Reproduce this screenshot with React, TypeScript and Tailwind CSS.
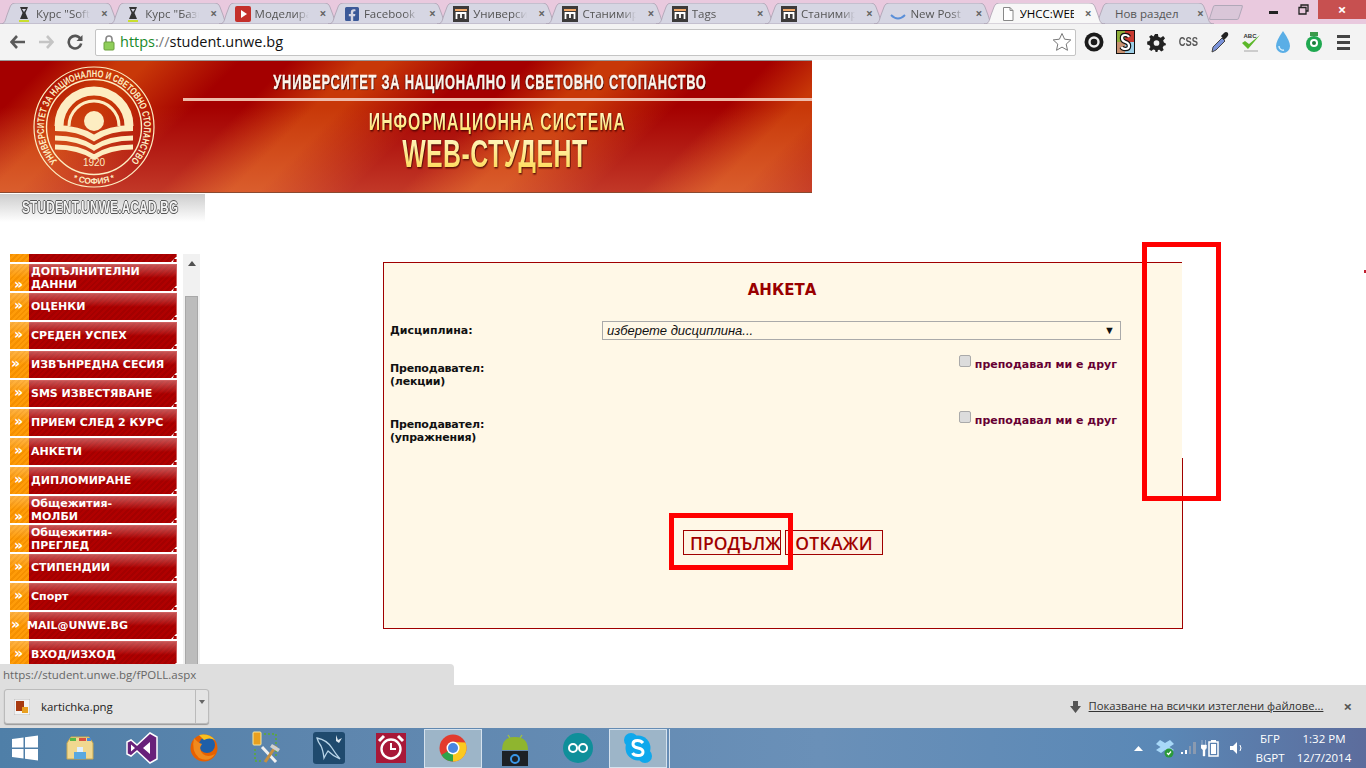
import { ReactNode } from "react";
import { FaFacebookSquare } from "react-icons/fa";

const ui = { fontFamily: '"Open Sans", "Liberation Sans", sans-serif' };

const BowFav = () => (
  <svg width="16" height="16" viewBox="0 0 16 16">
    <path d="M4 1 L12 1 L9.5 7 L12 13 L4 13 L6.5 7 Z M6 3 L8 6 L10 3 Z" fill="#333" fillRule="evenodd" />
    <path d="M3 15 H13" stroke="#c6e000" strokeWidth="1.6" />
  </svg>
);

const YtFav = () => (
  <svg width="16" height="16" viewBox="0 0 16 16">
    <rect x="0" y="0" width="16" height="16" rx="2" fill="#c4302b" />
    <path d="M6 4 L12 8 L6 12 Z" fill="#fff" />
  </svg>
);

const MFav = () => (
  <svg width="16" height="16" viewBox="0 0 16 16">
    <rect width="16" height="16" fill="#3c3a3a" />
    <rect x="2" y="3" width="12" height="2" fill="#f0a868" />
    <path d="M3.5 13 V7 H12.5 V13 M8 7 V12" fill="none" stroke="#fff" strokeWidth="1.8" />
  </svg>
);

const tabs: { title: string; icon: ReactNode; active?: boolean }[] = [
  { title: 'Курс "Soft', icon: <BowFav /> },
  { title: 'Курс "Бази', icon: <BowFav /> },
  { title: "Моделира", icon: <YtFav /> },
  { title: "Facebook", icon: <FaFacebookSquare className="text-[#3b5998] text-[16px]" /> },
  { title: "Универси", icon: <MFav /> },
  { title: "Станимир", icon: <MFav /> },
  { title: "Tags", icon: <MFav /> },
  { title: "Станимир", icon: <MFav /> },
  {
    title: "New Post",
    icon: (
      <svg width="16" height="16" viewBox="0 0 16 16">
        <path d="M1 9 Q8 16 15 9" fill="none" stroke="#5b8fd8" strokeWidth="1.8" />
      </svg>
    ),
  },
  {
    title: "УНСС:WEB",
    active: true,
    icon: (
      <svg width="16" height="16" viewBox="0 0 16 16">
        <path d="M3.5 1.5 H10 L13 4.5 V14.5 H3.5 Z M10 1.5 V4.5 H13" fill="#fff" stroke="#888" />
      </svg>
    ),
  },
  { title: "Нов раздел", icon: null },
];

const TabShape = ({ active }: { active?: boolean }) => (
  <svg className="absolute top-0 left-[-6px] h-[21px] w-[121px]" viewBox="0 0 121 21" preserveAspectRatio="none">
    <path
      d="M0 21 C5 21 5 18 7 12 L10 4 C11 1 13 0 16 0 H105 C108 0 110 1 111 4 L114 12 C116 18 116 21 121 21 Z"
      fill={active ? "#f7f7f7" : "#d6d6e3"}
      stroke="#a9a0b0"
      strokeWidth="0.8"
    />
  </svg>
);

const Tab = ({ title, icon, active }: { title: string; icon: ReactNode; active?: boolean }) => (
  <div className={active ? "relative z-10 h-[21px] w-[109.3px] shrink-0" : "relative h-[21px] w-[109.3px] shrink-0"}>
    <TabShape active={active} />
    <div className="relative flex h-full items-center pl-[10px]">
      {icon ? (
        <>
          <span className="flex w-[16px] shrink-0 justify-center">{icon}</span>
          <span className={active ? "ml-[4px] w-[54px] overflow-hidden text-[11.5px] whitespace-nowrap text-black" : "ml-[4px] w-[54px] overflow-hidden text-[11.5px] whitespace-nowrap text-[#555] [mask-image:linear-gradient(to_right,black_75%,transparent)]"}>
            {title}
          </span>
          <span className="ml-[11px] text-[12px] font-bold text-[#666]">×</span>
        </>
      ) : (
        <>
          <span className="ml-[6px] w-[62px] text-[11.5px] whitespace-nowrap text-[#555]">{title}</span>
          <span className="ml-[20px] text-[12px] font-bold text-[#666]">×</span>
        </>
      )}
    </div>
  </div>
);

const ToolbarIcons = () => (
  <div className="ml-[2px] flex items-center">
    <span className="flex w-[31.5px] justify-center">
      <svg width="20" height="20" viewBox="0 0 20 20">
        <circle cx="10" cy="10" r="9.5" fill="#1a1a1a" />
        <circle cx="10" cy="10" r="4.5" fill="none" stroke="#eee" strokeWidth="2.4" />
      </svg>
    </span>
    <span className="flex w-[31.5px] justify-center">
      <svg width="19" height="24" viewBox="0 0 19 24">
        <rect width="19" height="24" fill="#111" />
        <rect x="1" y="1" width="8" height="11" fill="#8fae3a" />
        <rect x="9" y="1" width="9" height="11" fill="#c83a30" />
        <rect x="1" y="12" width="8" height="11" fill="#c89070" />
        <rect x="9" y="12" width="9" height="11" fill="#9fd0e8" />
        <path d="M13 7 Q12 5 9 5 Q6 5 6 8 Q6 11 9.5 12 Q13 13 13 16 Q13 19 9.5 19 Q6.5 19 5.5 17" fill="none" stroke="#111" strokeWidth="4.5" />
        <path d="M13 7 Q12 5 9 5 Q6 5 6 8 Q6 11 9.5 12 Q13 13 13 16 Q13 19 9.5 19 Q6.5 19 5.5 17" fill="none" stroke="#fff" strokeWidth="2.2" />
      </svg>
    </span>
    <span className="flex w-[31.5px] justify-center">
      <svg width="19" height="19" viewBox="0 0 20 20">
        <path
          d="M8.5 1 H11.5 L12 4 L14.5 5 L17 3.2 L19 5.5 L17 8 L17.8 10 L19.8 11 V13 L17.6 13.5 L16.5 15.5 L17.6 18 L15 19.5 L13 17.6 L11.5 18 L11 20 H9 L8.5 18 L6.5 17.4 L4.5 19 L2.2 17 L3.6 14.8 L2.6 12.8 L0.2 12 V9 L2.6 8.4 L3.6 6 L2.2 4 L4.5 2 L6.8 3.6 Z"
          fill="#222"
        />
        <circle cx="10" cy="10.5" r="3" fill="#f2f2f2" />
      </svg>
    </span>
    <span className="flex w-[31.5px] justify-center text-[12px] font-bold text-[#555]" style={{ fontFamily: '"Liberation Sans", sans-serif' }}>
      <span className="inline-block scale-x-[0.78]">CSS</span>
    </span>
    <span className="flex w-[31.5px] justify-center">
      <svg width="20" height="24" viewBox="0 0 20 24">
        <path d="M2 22 L3 17 L12 8 L15 11 L6 20 Z" fill="#7a92d8" stroke="#444" />
        <path d="M11 6 L14 3 Q16 1 18 3 Q19 5 17 7 L14 10 Z" fill="#222" />
      </svg>
    </span>
    <span className="flex w-[31.5px] justify-center">
      <svg width="22" height="24" viewBox="0 0 22 24">
        <path d="M2 13 L8 19 L20 5 L9 14 L5 11 Z" fill="#5cb82a" />
        <path d="M4 21 H18" stroke="#ccc" strokeWidth="2" />
        <rect x="5" y="2" width="10" height="6" fill="#f2f2f2" />
        <text x="10" y="8" textAnchor="middle" fontSize="6" fontWeight="700" fill="#333" fontFamily="Liberation Sans">ABC</text>
      </svg>
    </span>
    <span className="flex w-[31.5px] justify-center">
      <svg width="16" height="24" viewBox="0 0 16 24">
        <path d="M8 1 Q15 11 15 16 A7 7 0 0 1 1 16 Q1 11 8 1 Z" fill="#5aaee6" />
        <path d="M4 16 A4 4 0 0 0 9 20" fill="none" stroke="#d2ecfb" strokeWidth="1.5" />
      </svg>
    </span>
    <span className="flex w-[31.5px] justify-center">
      <svg width="18" height="24" viewBox="0 0 18 24">
        <path d="M5 2 H13 V6 H5 Z" fill="#3a9a4a" />
        <circle cx="9" cy="14" r="8" fill="#1fa850" />
        <circle cx="9" cy="13" r="4" fill="#fff" />
        <circle cx="9" cy="13" r="2" fill="#1a7a3a" />
      </svg>
    </span>
    <span className="ml-[-2px] flex w-[30px] flex-col items-center gap-[3px]">
      <span className="h-[3px] w-[13px] bg-[#444]" />
      <span className="h-[3px] w-[13px] bg-[#444]" />
      <span className="h-[3px] w-[13px] bg-[#444]" />
    </span>
  </div>
);

const Logo = () => (
  <svg className="mt-[5px] ml-[33px] shrink-0" width="122" height="122" viewBox="0 0 122 122">
    <defs>
      <path id="ringTop" d="M25.6 96.4 A50 50 0 1 1 96.4 96.4" />
      <path id="ringBottom" d="M24.4 104.7 A57 57 0 0 0 97.6 104.7" />
    </defs>
    <g fill="none" stroke="#fdedc2">
      <circle cx="61" cy="61" r="60" strokeWidth="1.2" />
      <circle cx="61" cy="61" r="47.5" strokeWidth="1.4" />
      <path d="M26 60 A35 35 0 0 1 96 60" strokeWidth="9" />
      <path d="M36 60 A25 25 0 0 1 86 60" strokeWidth="3" />
    </g>
    <circle cx="61" cy="55" r="10" fill="#fdedc2" />
    <g fill="none" stroke="#fdedc2">
      <path d="M22 62 Q46 62 61 72 Q76 62 100 62" strokeWidth="6" />
      <path d="M22 72 Q46 72 61 82 Q76 72 100 72" strokeWidth="5" />
      <path d="M22 81 Q46 81 61 91 Q76 81 100 81" strokeWidth="5" />
    </g>
    <g fill="#fdedc2" fontFamily="Liberation Sans, sans-serif" fontWeight="700">
      <text fontSize="10">
        <textPath href="#ringTop" startOffset="2" textLength="231" lengthAdjust="spacingAndGlyphs">УНИВЕРСИТЕТ ЗА НАЦИОНАЛНО И СВЕТОВНО СТОПАНСТВО</textPath>
      </text>
      <text fontSize="8.5">
        <textPath href="#ringBottom" startOffset="50%" textAnchor="middle">* СОФИЯ *</textPath>
      </text>
      <text x="61" y="100" textAnchor="middle" fontSize="10" fontWeight="400">1920</text>
    </g>
  </svg>
);

const banner = { fontFamily: '"Liberation Sans", sans-serif' };

const Banner = () => (
  <div className="flex h-[134px] w-[812px] border-t border-b border-t-[#999] border-b-[#8a4a30] bg-[linear-gradient(to_bottom,rgba(255,170,120,0)_35%,rgba(255,170,120,0.33)_100%),repeating-linear-gradient(135deg,#a40000_0px,#a40000_35px,#c83808_85px,#c83808_105px,#a40000_170px)]">
    <Logo />
    <div className="ml-[28px] flex w-[629px] flex-col items-center" style={banner}>
      <div className="mt-[9px] mr-[16px] scale-x-[0.612] text-[21px] leading-[24px] font-bold tracking-[1.25px] whitespace-nowrap text-[#fff4ea] [-webkit-text-stroke:0.4px_#fff4ea] [text-shadow:1px_1px_1px_#3a0000,-1px_0_1px_#5a0000]">
        УНИВЕРСИТЕТ ЗА НАЦИОНАЛНО И СВЕТОВНО СТОПАНСТВО
      </div>
      <div className="mt-[4px] h-[3px] w-full bg-[#eebbaa]" />
      <div className="mt-[9px] mr-[1px] scale-x-[0.658] bg-[linear-gradient(to_bottom,#fffbd0,#ffe060)] bg-clip-text text-[24px] leading-[24px] font-bold tracking-[1.55px] whitespace-nowrap text-transparent [filter:drop-shadow(1px_1px_1px_#3a0000)]">
        ИНФОРМАЦИОННА СИСТЕМА
      </div>
      <div className="mt-[1px] mr-[6px] scale-x-[0.64] bg-[linear-gradient(to_bottom,#fff8c8,#ffd850)] bg-clip-text text-[39px] leading-[38px] font-bold tracking-[0.6px] whitespace-nowrap text-transparent [filter:drop-shadow(1px_1px_1px_#3a0000)]">
        WEB-СТУДЕНТ
      </div>
    </div>
  </div>
);

const menu: { lines: string[]; low?: boolean; far?: boolean; textLeft?: boolean }[] = [
  { lines: [""] },
  { lines: ["ДОПЪЛНИТЕЛНИ", "ДАННИ"], low: true },
  { lines: ["ОЦЕНКИ"] },
  { lines: ["СРЕДЕН УСПЕХ"] },
  { lines: ["ИЗВЪНРЕДНА СЕСИЯ"], far: true },
  { lines: ["SMS ИЗВЕСТЯВАНЕ"] },
  { lines: ["ПРИЕМ СЛЕД 2 КУРС"] },
  { lines: ["АНКЕТИ"] },
  { lines: ["ДИПЛОМИРАНЕ"] },
  { lines: ["Общежития-", "МОЛБИ"], low: true },
  { lines: ["Общежития-", "ПРЕГЛЕД"], low: true },
  { lines: ["СТИПЕНДИИ"] },
  { lines: ["Спорт"] },
  { lines: ["MAIL@UNWE.BG"], far: true, textLeft: true },
  { lines: ["ВХОД/ИЗХОД"] },
];

const MenuItem = ({ lines, low, far, textLeft }: { lines: string[]; low?: boolean; far?: boolean; textLeft?: boolean }) => (
  <div className="relative flex h-[27px] w-[167px] shrink-0 text-[11px] leading-[13px] font-bold text-white" style={{ fontFamily: '"DejaVu Sans", sans-serif' }}>
    <div className={`flex w-[19px] shrink-0 bg-[linear-gradient(to_bottom,rgba(255,255,255,0.25),rgba(255,255,255,0)_50%),repeating-linear-gradient(135deg,#ff9c08_0px,#ff9c08_2px,#f59000_2px,#f59000_4px)] text-[14px] ${low ? "items-end" : "items-center pb-[2px]"} ${far ? "pl-[1px]" : "pl-[4px]"}`}>
      »
    </div>
    <div className={`flex flex-1 flex-col justify-center border-t border-r border-[#cf5f5f] bg-[linear-gradient(to_bottom,rgba(255,255,255,0.32),rgba(255,255,255,0)_50%),repeating-linear-gradient(135deg,#b00000_0px,#b00000_2px,#a30000_2px,#a30000_4px)] whitespace-nowrap ${low ? "" : "pb-[2px]"} ${textLeft ? "[text-indent:-2px]" : "pl-[2px]"}`}>
      {lines.map((l) => (
        <span key={l}>{l}</span>
      ))}
    </div>
    <svg className="absolute right-0 bottom-0" width="6" height="5" viewBox="0 0 6 5">
      <path d="M0 5 L5 0 H6 V2 H3 L2 5 Z" fill="#fff" />
    </svg>
  </div>
);

const Sidebar = () => (
  <div className="flex h-[431px] w-[200px] shrink-0 pl-[10px]">
    <div className="h-full w-[167px] overflow-hidden">
      <div className="mt-[-19px] flex flex-col gap-[2px]">
        {menu.map((m, i) => (
          <MenuItem key={i} {...m} />
        ))}
      </div>
    </div>
    <div className="ml-[6px] flex h-full w-[17px] flex-col items-center bg-[#f1f1f1]">
      <svg className="mt-[7px]" width="8" height="5" viewBox="0 0 8 5">
        <path d="M4 0 L8 5 H0 Z" fill="#505050" />
      </svg>
      <div className="mt-[30px] w-[13px] flex-1 border border-[#a8a8a8] bg-[#bcbcbc]" />
    </div>
  </div>
);

const OtherTeacher = () => (
  <label className="mt-[-7px] mr-[4px] flex text-[11px] font-bold text-[#660033]">
    <span className="ml-[1px] h-[12px] w-[12px] rounded-[2px] border border-[#aaa] bg-[#dcdcdc]" />
    <span className="mt-[3px] ml-[4px] leading-[13px]">преподавал ми е друг</span>
  </label>
);

const Form = () => (
  <div className="relative mt-[8px] ml-[183px] flex h-[367px] w-[799px] flex-col border-t border-b border-l border-[#a00000] bg-[#fff8e7] pr-[61px] pl-[6px] text-[11px]" style={{ fontFamily: '"DejaVu Sans", sans-serif' }}>
    <div className="mt-[17px] ml-[53px] text-center text-[15px] leading-[20px] font-bold text-[#990000]">АНКЕТА</div>
    <div className="mt-[21px] flex h-[19px] font-bold text-[#111]">
      <span className="w-[212px] shrink-0 pt-[3px] leading-[13px]">Дисциплина:</span>
      <div className="flex h-[19px] flex-1 items-center justify-between border border-[#aaa] pr-[5px] pl-[4px] text-[13px] font-normal italic" style={{ fontFamily: '"Liberation Sans", sans-serif' }}>
        изберете дисциплина...
        <span className="text-[11px] not-italic">▼</span>
      </div>
    </div>
    <div className="mt-[22px] flex justify-between leading-[13px] font-bold text-[#111]">
      <span className="tracking-[-0.2px]">
        Преподавател:
        <br />
        (лекции)
      </span>
      <OtherTeacher />
    </div>
    <div className="mt-[30px] flex justify-between leading-[13px] font-bold text-[#111]">
      <span className="tracking-[-0.2px]">
        Преподавател:
        <br />
        (упражнения)
      </span>
      <OtherTeacher />
    </div>
    <div className="mt-[86px] mr-[-61px] ml-[-6px] flex justify-center gap-[4px] text-[17.5px] font-semibold text-[#a00000]" style={ui}>
      <button className="h-[25px] w-[98px] overflow-hidden border border-[#a00000] bg-[#fff4e4] pl-[6px] text-left leading-[22px] whitespace-nowrap">ПРОДЪЛЖИ</button>
      <button className="h-[25px] w-[98px] border border-[#a00000] bg-[#ffefe0] leading-[22px] tracking-[0.3px]">ОТКАЖИ</button>
    </div>
    <div className="absolute top-[195px] right-[-1px] bottom-[-1px] w-px bg-[#a00000]" />
  </div>
);

const ChromeIcon = () => (
  <svg width="28" height="28" viewBox="0 0 28 28">
    <circle cx="14" cy="14" r="13.5" fill="#e23b2e" />
    <path d="M14 14 L2.5 21 A13.5 13.5 0 0 0 14 27.5 L21 14 Z" fill="#2fa34a" />
    <path d="M14 14 L14 27.5 A13.5 13.5 0 0 0 26.4 8.5 L14 8 Z" fill="#fbc920" />
    <circle cx="14" cy="14" r="6.5" fill="#fff" />
    <circle cx="14" cy="14" r="5" fill="#4a86e0" />
  </svg>
);

const taskIcons: { icon: ReactNode; box?: boolean; edge?: boolean }[] = [
  {
    icon: (
      <svg width="30" height="28" viewBox="0 0 30 28">
        <path d="M2 9 L6 3 H24 L28 9 V25 H2 Z" fill="#f0d890" stroke="#c8a850" />
        <rect x="5" y="4" width="6" height="3" fill="#58b848" />
        <rect x="14" y="4" width="7" height="3" fill="#d85040" />
        <rect x="22" y="4" width="4" height="3" fill="#4888d8" />
        <path d="M9 18 H21 V25 H9 Z" fill="#58a8e0" />
        <path d="M12 13 H18 V18 H12 Z" fill="#dff0ff" />
      </svg>
    ),
  },
  {
    icon: (
      <svg width="32" height="32" viewBox="0 0 32 32">
        <path d="M24 1 L31 5 V27 L24 31 L11 19 L5 24 L1 22 V10 L5 8 L11 13 Z" fill="#68217a" stroke="#fff" strokeWidth="1.5" />
        <path d="M24 10 L17 16 L24 22 Z M5 12.5 V19.5 L9 16 Z" fill="#fff" />
      </svg>
    ),
  },
  {
    icon: (
      <svg width="30" height="30" viewBox="0 0 30 30">
        <circle cx="15" cy="15" r="13.5" fill="#e66000" />
        <circle cx="18" cy="12" r="8" fill="#1f5fa8" />
        <path d="M5 5 Q2 18 10 25 Q20 30 26 21 Q19 25 14 21 Q9 16 13 11 Q9 10 5 5 Z" fill="#f08a1d" />
        <path d="M10 2 Q20 0 26 7 Q20 4 15 7 Z" fill="#f8c020" />
      </svg>
    ),
  },
  {
    icon: (
      <svg width="30" height="34" viewBox="0 0 30 34">
        <rect x="1" y="1" width="8" height="13" rx="1" fill="#e8a020" stroke="#f8e8a0" />
        <path d="M12 3 H24 V26 M3 18 V30 H9" fill="none" stroke="#5caa30" strokeWidth="1.5" strokeDasharray="2 2" />
        <path d="M10 16 L24 31" stroke="#f0f0f0" strokeWidth="3" />
        <path d="M24 15 L13 31" stroke="#c89040" strokeWidth="3" />
        <path d="M20 13 L28 18 L26 21 L18 16 Z" fill="#d0d0d0" />
      </svg>
    ),
  },
  {
    icon: (
      <svg width="32" height="32" viewBox="0 0 32 32">
        <rect width="32" height="32" rx="3" fill="#1f4a6e" />
        <path d="M4 6 Q14 8 19 16 Q22 21 27 27 Q20 24 15 19 Q13 22 11 26 Q10 18 8 14 Q5 10 4 6 Z" fill="none" stroke="#b8d4e8" strokeWidth="1.3" />
        <path d="M23 3 L25 8 L29 6 L26 11 L23 9 Z" fill="#dfe8f0" />
      </svg>
    ),
  },
  {
    icon: (
      <svg width="30" height="30" viewBox="0 0 30 30">
        <rect width="30" height="30" fill="#a81838" />
        <circle cx="15" cy="16" r="9.5" fill="none" stroke="#fff" strokeWidth="2.4" />
        <path d="M15 10 V16 H20" fill="none" stroke="#fff" strokeWidth="2" />
        <path d="M3 8 L8 3 M27 8 L22 3" stroke="#fff" strokeWidth="3" />
      </svg>
    ),
  },
  { icon: <ChromeIcon />, box: true },
  {
    icon: (
      <svg width="32" height="36" viewBox="0 0 32 36">
        <path d="M9 5 L11 8 M23 5 L21 8" stroke="#a4c639" strokeWidth="1.3" />
        <path d="M3 20 Q3 7 16 7 Q29 7 29 20 Z" fill="#8fb52f" />
        <rect x="3" y="21" width="26" height="15" fill="#1d2126" />
        <circle cx="16" cy="29" r="4" fill="none" stroke="#3a98e8" strokeWidth="2" />
      </svg>
    ),
  },
  {
    icon: (
      <svg width="30" height="30" viewBox="0 0 30 30">
        <circle cx="15" cy="15" r="15" fill="#0f8f9a" />
        <circle cx="10" cy="15" r="4" fill="none" stroke="#fff" strokeWidth="2" />
        <circle cx="20" cy="15" r="4" fill="none" stroke="#fff" strokeWidth="2" />
      </svg>
    ),
  },
  {
    icon: (
      <svg width="30" height="32" viewBox="0 0 30 32">
        <circle cx="8" cy="8" r="7" fill="#0fa8ec" />
        <circle cx="22" cy="24" r="7" fill="#0fa8ec" />
        <circle cx="15" cy="16" r="12.5" fill="#0fa8ec" />
        <path d="M20 11 Q18 8.5 14.5 8.5 Q10 8.5 10 12 Q10 15 15 16 Q20 17 20 20 Q20 23.5 15 23.5 Q11 23.5 9.5 21" fill="none" stroke="#fff" strokeWidth="3" />
      </svg>
    ),
    box: true,
    edge: true,
  },
];

const Tray = () => (
  <div className="ml-auto flex items-center pr-[14px] text-[11.5px] text-white" style={ui}>
    <svg width="9" height="5" viewBox="0 0 9 5">
      <path d="M4.5 0 L9 5 H0 Z" fill="#fff" />
    </svg>
    <svg className="ml-[13px]" width="18" height="19" viewBox="0 0 18 19">
      <path d="M4 1 L9 4 L14 1 L18 5 L13.5 8 L18 11 L13 14 L9 11 L5 14 L0 11 L4.5 8 L0 5 Z" fill="#a8d8f8" />
      <circle cx="13" cy="14" r="4.5" fill="#2a9a3a" />
      <path d="M11 14 L12.5 15.5 L15 12.5" fill="none" stroke="#fff" strokeWidth="1.2" />
    </svg>
    <svg className="ml-[6px]" width="17" height="14" viewBox="0 0 17 14">
      <path d="M1 11h2v2H1z M5 9h2v4H5z M9 5h2v8H9z M13 1h3v12h-3z" fill="#fff" />
      <path d="M9 5h2v8H9z M13 1h3v12h-3z" fill="#8a9ab0" />
    </svg>
    <svg className="ml-[4px]" width="18" height="18" viewBox="0 0 18 18">
      <path d="M1 1V6M4.5 1V6M0 6H5.5V9L4 11V17H2V11L0 9Z" fill="#fff" stroke="#fff" strokeWidth="0.4" />
      <rect x="8" y="3" width="9" height="14" fill="none" stroke="#fff" strokeWidth="1.5" />
      <rect x="10" y="1" width="5" height="2" fill="#fff" />
      <rect x="10" y="5" width="5" height="10" fill="#fff" />
    </svg>
    <svg className="ml-[11px]" width="14" height="14" viewBox="0 0 14 14">
      <path d="M0 5 H3 L7 1 V13 L3 9 H0 Z" fill="#fff" />
      <path d="M10 4 Q12 7 10 10" fill="none" stroke="#fff" />
    </svg>
    <div className="ml-[6px] flex w-[40px] flex-col items-center leading-[19px]">
      <span>БГР</span>
      <span>BGPT</span>
    </div>
    <div className="ml-[6px] flex w-[56px] flex-col items-center leading-[19px]">
      <span>1:32 PM</span>
      <span>12/7/2014</span>
    </div>
  </div>
);

export default function App() {
  return (
    <div className="relative flex h-[768px] w-[1366px] flex-col overflow-hidden bg-white" style={ui}>
      {/* tabs */}
      <div className="relative flex h-[24px] shrink-0 bg-[#e9c9de] pt-[3px] pl-[6px]">
        {tabs.map((t, i) => (
          <Tab key={i} {...t} />
        ))}
        <div className="mt-[2px] ml-[3px] h-[15px] w-[30px] -skew-x-[18deg] rounded-[2px] border border-[#b0a8b8] bg-[#d9c6d8]" />
        <div className="absolute top-0 right-0 flex h-[19px] items-center">
          <span className="mt-[5px] mr-[20px] h-[3px] w-[9px] bg-[#222]" />
          <svg className="mr-[9px]" width="11" height="11" viewBox="0 0 11 11">
            <path d="M3 3V1H10V7H8M1 3.5H8V10H1Z" fill="none" stroke="#222" strokeWidth="1.3" />
          </svg>
          <span className="flex h-[19px] w-[48px] items-center justify-center bg-[#c75050] text-[15px] font-bold text-white">×</span>
        </div>
      </div>

      {/* toolbar */}
      <div className="relative flex h-[36px] shrink-0 items-center bg-[#f3f3f3]">
        <div className="flex w-[95px] shrink-0 items-center pl-[10px] text-[#555]">
          <svg width="16" height="14" viewBox="0 0 16 14">
            <path d="M7 1 L1.5 7 L7 13 M2 7 H15" fill="none" stroke="#5a5a5a" strokeWidth="2.6" />
          </svg>
          <svg className="ml-[12px]" width="16" height="14" viewBox="0 0 16 14">
            <path d="M9 1 L14.5 7 L9 13 M14 7 H1" fill="none" stroke="#c4c4c4" strokeWidth="2.6" />
          </svg>
          <svg className="ml-[13px]" width="16" height="16" viewBox="0 0 16 16">
            <path d="M13.5 5 A6.3 6.3 0 1 0 14.2 9.5" fill="none" stroke="#555" strokeWidth="2.6" />
            <path d="M15.5 1 V7 H9.5 Z" fill="#555" />
          </svg>
        </div>
        <div className="flex h-[27px] w-[981px] shrink-0 items-center rounded-[2px] border border-[#c4c4c4] bg-white pr-[3px] pl-[7px]">
          <svg width="12" height="17" viewBox="0 0 12 17">
            <path d="M3 8 V5 A3 3 0 0 1 9 5 V8" fill="none" stroke="#888" strokeWidth="1.6" />
            <rect x="1" y="8" width="10" height="8" rx="1" fill="#8fce5a" stroke="#6aa03c" />
          </svg>
          <span className="ml-[5px] text-[14.5px] leading-none text-[#111]">
            <span className="text-[#1a8a2a]">https</span>
            <span className="text-[#777]">://</span>
            student.unwe.bg
          </span>
          <svg className="ml-auto" width="20" height="20" viewBox="0 0 20 20">
            <path d="M10 1.5 L12.6 7.2 L18.8 7.9 L14.2 12.1 L15.5 18.3 L10 15.1 L4.5 18.3 L5.8 12.1 L1.2 7.9 L7.4 7.2 Z" fill="none" stroke="#777" strokeWidth="1" />
          </svg>
        </div>
        <ToolbarIcons />
      </div>

      {/* page */}
      <div className="flex h-[625px] shrink-0 flex-col overflow-hidden bg-white">
        <Banner />
        <div className="mt-[1px] flex h-[28px] w-[205px] shrink-0 items-center justify-center bg-[linear-gradient(to_bottom,#cdcdcd,#ffffff)] pr-[4px] text-[16px] font-bold text-[#f4f4f4] [text-shadow:1px_0_0_#555,-1px_0_0_#555,0_1px_0_#555,0_-1px_0_#555]" style={banner}>
          <span className="inline-block scale-x-[0.73] tracking-[0.4px] whitespace-nowrap">STUDENT.UNWE.ACAD.BG</span>
        </div>
        <div className="mt-[32px] flex">
          <Sidebar />
          <Form />
        </div>
      </div>

      {/* status bubble + download bar */}
      <div className="absolute top-[664px] left-0 flex h-[21px] w-[454px] items-center rounded-tr-[4px] bg-[#dedede] pl-[3px] text-[11.5px] text-[#666]">
        https://student.unwe.bg/fPOLL.aspx
      </div>
      <div className="flex h-[43px] shrink-0 items-center bg-[#dedede] pl-[4px]">
        <div className="flex h-[35px] w-[205px] items-stretch rounded-[3px] border border-[#bbb] bg-[#e4e4e4] shadow-[0_1px_1px_#999]">
          <div className="flex flex-1 items-center pl-[9px]">
            <svg width="16" height="16" viewBox="0 0 16 16">
              <rect width="16" height="16" fill="#f4f4f4" stroke="#bbb" />
              <rect x="2" y="2" width="8" height="10" fill="#a83a10" />
              <rect x="8" y="8" width="6" height="6" fill="#e8a020" />
            </svg>
            <span className="ml-[11px] text-[11.4px] text-[#222]">kartichka.png</span>
          </div>
          <div className="flex w-[13px] justify-center border-l border-[#bbb] pt-[10px]">
            <svg width="6" height="4" viewBox="0 0 6 4">
              <path d="M0 0 H6 L3 4 Z" fill="#666" />
            </svg>
          </div>
        </div>
        <div className="ml-auto flex items-center">
          <svg width="11" height="12" viewBox="0 0 11 12">
            <path d="M3 0 H8 V5 H11 L5.5 12 L0 5 H3 Z" fill="#555" />
          </svg>
          <span className="ml-[8px] text-[11.25px] text-[#333] underline">Показване на всички изтеглени файлове...</span>
          <span className="mr-[14px] ml-[20px] text-[15px] leading-none font-bold text-[#555]">×</span>
        </div>
      </div>

      {/* taskbar */}
      <div className="flex h-[40px] shrink-0 items-center bg-[linear-gradient(to_right,#4f7fa8,#5e86ae_25%,#6a90b8_60%,#5a88b6_85%,#5c6c9c)]">
        <div className="flex w-[49px] shrink-0 justify-center">
          <svg width="26" height="26" viewBox="0 0 26 26">
            <path d="M0 4 L11.5 2.4 V12.4 H0 Z M13 2.2 L26 0.4 V12.4 H13 Z M0 14 H11.5 V23.6 L0 22 Z M13 14 H26 V25.6 L13 23.8 Z" fill="#fff" />
          </svg>
        </div>
        {taskIcons.map((t, i) => (
          <div key={i} className="flex h-[40px] w-[62.2px] shrink-0 items-center justify-center">
            <div className={t.box ? "flex h-[39px] w-[58px] items-center justify-center border border-[#d5e2ee] bg-[#9db5c8]" : "flex items-center justify-center"}>{t.icon}</div>
            {t.edge && <div className="h-[39px] w-[3px] border-r border-[#d5e2ee]" />}
          </div>
        ))}
        <Tray />
      </div>

      {/* annotations over the screenshot */}
      <div className="absolute top-[242px] left-[1142px] h-[259px] w-[79px] border-[5px] border-[#ff0000]" />
      <div className="absolute top-[513px] left-[669px] h-[57px] w-[124px] border-[5px] border-[#ff0000]" />
      <div className="absolute top-[270px] left-[1364px] h-[3px] w-[2px] bg-[#c02030]" />
    </div>
  );
}
